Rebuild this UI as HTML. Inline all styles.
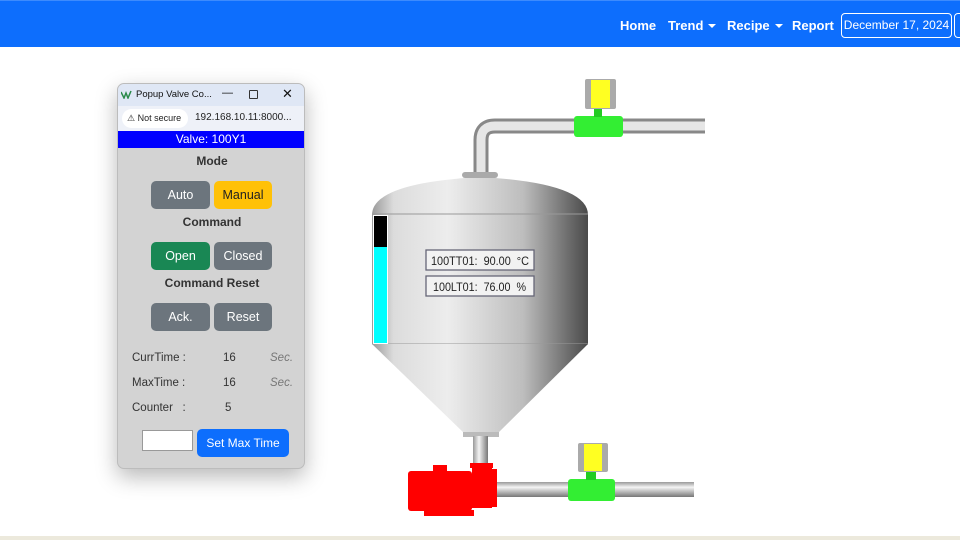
<!DOCTYPE html>
<html><head><meta charset="utf-8">
<style>
*{box-sizing:border-box;margin:0;padding:0}
body{width:960px;height:540px;overflow:hidden;background:#fff;font-family:"Liberation Sans",sans-serif;position:relative}
.nav{position:absolute;left:0;top:0;width:960px;height:47px;background:#0d6efd;border-top:1px solid #3d8bfd}
.nav a{position:absolute;top:17px;color:#fff;font-weight:bold;font-size:13px;white-space:nowrap}
.caret{display:inline-block;margin-left:5px;border-left:4px solid transparent;border-right:4px solid transparent;border-top:4px solid #fff;vertical-align:2px}
.date{position:absolute;left:841px;top:12px;width:111px;height:25px;border:1px solid #fff;border-radius:4px;color:#fff;font-size:12px;line-height:23px;text-align:center;white-space:nowrap}
.date2{position:absolute;left:954px;top:12px;width:20px;height:25px;border:1px solid #fff;border-radius:4px}
.foot{position:absolute;left:0;top:536px;width:960px;height:4px;background:#ece9dc}
.pop{position:absolute;left:117px;top:83px;width:188px;height:386px;background:#d3d3d3;border:1px solid #bcbcbc;border-radius:7px;overflow:hidden;box-shadow:0 8px 22px rgba(0,0,0,.28)}
.tb{height:22px;background:#dfe7f5;font-size:9.5px;color:#111;position:relative}
.ab{height:25px;background:#eef1f8;position:relative;font-size:10px;color:#222}
.hd{height:17px;background:#0000ff;color:#fff;font-size:12px;text-align:center;line-height:17px}
.lbl{position:absolute;width:188px;text-align:center;font-size:12px;font-weight:bold;color:#333}
.btn{position:absolute;height:28px;border-radius:5px;color:#fff;font-size:12.5px;text-align:center;line-height:28px}
.g{background:#6c757d}
.row{position:absolute;font-size:11.5px;color:#333;white-space:pre}
</style></head><body>
<div class="nav">
<a style="left:620px">Home</a>
<a style="left:668px">Trend<span class="caret"></span></a>
<a style="left:727px">Recipe<span class="caret"></span></a>
<a style="left:792px">Report</a>
<div class="date">December 17, 2024</div><div class="date2"></div>
</div>

<div class="pop">
 <div class="tb">
  <svg style="position:absolute;left:3px;top:6px" width="12" height="9"><path d="M0 2 L3 8 L5 3 L7 8 L10 1" stroke="#2a8a4a" stroke-width="1.5" fill="none"/></svg>
  <span style="position:absolute;left:18px;top:5px">Popup Valve Co...</span>
  <span style="position:absolute;left:104px;top:3px;font-size:11px">—</span>
  <span style="position:absolute;left:131px;top:6px;width:9px;height:9px;border:1px solid #333;border-radius:1px"></span>
  <span style="position:absolute;left:164px;top:2px;font-size:13px">✕</span>
 </div>
 <div class="ab">
  <span style="position:absolute;left:4px;top:3px;height:19px;width:66px;background:#fff;border-radius:10px;font-size:9px;line-height:19px;padding-left:5px">⚠ Not secure</span>
  <span style="position:absolute;left:77px;top:6px">192.168.10.11:8000...</span>
 </div>
 <div class="hd">Valve: 100Y1</div>
 <div class="lbl" style="top:70px">Mode</div>
 <div class="btn g" style="left:33px;top:97px;width:59px">Auto</div>
 <div class="btn" style="left:96px;top:97px;width:58px;background:#ffc107;color:#222">Manual</div>
 <div class="lbl" style="top:131px">Command</div>
 <div class="btn" style="left:33px;top:158px;width:59px;background:#198754">Open</div>
 <div class="btn g" style="left:96px;top:158px;width:58px">Closed</div>
 <div class="lbl" style="top:192px">Command Reset</div>
 <div class="btn g" style="left:33px;top:219px;width:59px">Ack.</div>
 <div class="btn g" style="left:96px;top:219px;width:58px">Reset</div>
 <div class="row" style="left:14px;top:268px">CurrTime :</div><div class="row" style="left:105px;top:268px">16</div><div class="row" style="left:152px;top:268px;font-style:italic;color:#777">Sec.</div>
 <div class="row" style="left:14px;top:293px">MaxTime :</div><div class="row" style="left:105px;top:293px">16</div><div class="row" style="left:152px;top:293px;font-style:italic;color:#777">Sec.</div>
 <div class="row" style="left:14px;top:318px">Counter   :</div><div class="row" style="left:107px;top:318px">5</div>
 <div style="position:absolute;left:24px;top:346px;width:51px;height:21px;background:#fff;border:1px solid #999"></div>
 <div class="btn" style="left:79px;top:345px;width:92px;background:#0d6efd;font-size:12px">Set Max Time</div>
</div>

<svg style="position:absolute;left:0;top:0" width="960" height="540">
<defs>
<linearGradient id="tk" x1="0" x2="1"><stop offset="0" stop-color="#9a9a9a"/><stop offset=".1" stop-color="#dcdcdc"/><stop offset=".35" stop-color="#ededed"/><stop offset=".7" stop-color="#bdbdbd"/><stop offset="1" stop-color="#4a4a4a"/></linearGradient>
<linearGradient id="ph" x1="0" y1="0" x2="0" y2="1"><stop offset="0" stop-color="#999"/><stop offset=".35" stop-color="#f4f4f4"/><stop offset="1" stop-color="#777"/></linearGradient>
<linearGradient id="pv" x1="0" x2="1"><stop offset="0" stop-color="#999"/><stop offset=".4" stop-color="#f4f4f4"/><stop offset="1" stop-color="#777"/></linearGradient>
</defs>
<path d="M481 177 V140 Q481 126 495 126 H705" stroke="#888" stroke-width="15" fill="none"/>
<path d="M481 177 V140 Q481 126 495 126 H705" stroke="#e6e6e6" stroke-width="9" fill="none"/>
<rect x="574" y="116" width="49" height="21" rx="3" fill="#33ee33"/>
<rect x="594" y="108" width="8" height="9" fill="#2c2"/>
<rect x="585" y="79" width="31" height="30" fill="#aaa" rx="2"/>
<rect x="591" y="80" width="19" height="28" fill="#ffff22"/>
<path d="M372 215 Q372 183 480 177 Q588 183 588 215 Z" fill="url(#tk)"/>
<rect x="462" y="172" width="36" height="6" rx="3" fill="#aaa"/>
<rect x="372" y="214" width="216" height="130" fill="url(#tk)"/>
<line x1="372" y1="214" x2="588" y2="214" stroke="#999"/>
<line x1="372" y1="344" x2="588" y2="344" stroke="#999"/>
<path d="M372 344 H588 L497 434 H465 Z" fill="url(#tk)"/>
<rect x="463" y="432" width="36" height="5" fill="#bbb"/>
<rect x="373" y="215" width="15" height="129" fill="#fff"/>
<rect x="374" y="216" width="13" height="31" fill="#000"/>
<rect x="374" y="247" width="13" height="96" fill="#00ffff"/>
<rect x="426" y="250" width="108" height="20" fill="#f2f2f2" stroke="#667" stroke-width="1.3"/>
<text x="431" y="265" font-size="11.5" font-family="Liberation Sans" fill="#222" style="white-space:pre" xml:space="preserve" textLength="98" lengthAdjust="spacingAndGlyphs">100TT01:  90.00  °C</text>
<rect x="426" y="276" width="108" height="20" fill="#f2f2f2" stroke="#667" stroke-width="1.3"/>
<text x="433" y="291" font-size="11.5" font-family="Liberation Sans" fill="#222" style="white-space:pre" xml:space="preserve" textLength="93" lengthAdjust="spacingAndGlyphs">100LT01:  76.00  %</text>
<rect x="473" y="436" width="15" height="27" fill="url(#pv)"/>
<rect x="495" y="482" width="199" height="15" fill="url(#ph)"/>
<rect x="568" y="479" width="47" height="22" rx="3" fill="#33ee33"/>
<rect x="586" y="471" width="10" height="9" fill="#2c2"/>
<rect x="578" y="443" width="30" height="29" fill="#aaa" rx="2"/>
<rect x="584" y="444" width="18" height="27" fill="#ffff22"/>
<g fill="#f00">
<rect x="408" y="471" width="64" height="40" rx="3"/>
<rect x="433" y="465" width="14" height="7"/>
<rect x="424" y="510" width="50" height="6"/>
<rect x="470" y="463" width="23" height="5"/>
<rect x="472" y="466" width="20" height="42"/>
<rect x="492" y="469" width="5" height="38"/>
</g>
</svg>
<div class="foot"></div>
</body></html>
